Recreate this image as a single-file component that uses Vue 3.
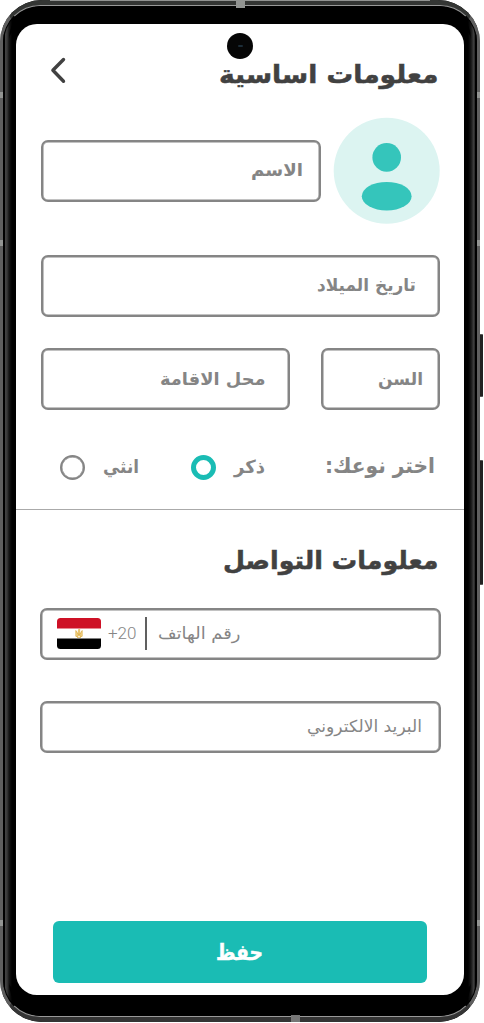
<script setup>
import { h } from 'vue'

// Label fitted to a fixed width; `base` is the baseline inside a box of height `ht`.
const Label = (p) =>
  h('svg', { width: p.w, height: p.ht, viewBox: `0 0 ${p.w} ${p.ht}`, style: { display: 'block', overflow: 'visible', flex: 'none' } }, [
    h('text', {
      x: 0,
      y: p.base,
      direction: 'ltr',
      fill: p.color || '#858585',
      stroke: p.bold ? p.color || '#858585' : 'none',
      'stroke-width': p.bold || 0,
      'font-family': p.font || "'DejaVu Sans', sans-serif",
      'font-size': p.size,
      'font-weight': p.weight || 700,
      textLength: p.w,
      lengthAdjust: 'spacingAndGlyphs'
    }, p.text)
  ])
Label.props = ['w', 'ht', 'base', 'size', 'text', 'color', 'weight', 'font', 'bold']

// The trailing right-to-left mark keeps the colon on the left of the phrase.
const genderPrompt = 'اختر نوعك:\u200F'
</script>

<template>
  <div class="stage">
    <div class="phone">
      <div class="rim"></div>
      <i class="band top-a"></i><i class="band top-b"></i><i class="band bottom"></i>
      <i class="band l1"></i><i class="band l2"></i><i class="band l3"></i>
      <i class="band r1"></i><i class="band r2"></i><i class="band r3"></i>
      <i class="key power"></i><i class="key volume"></i>
      <main class="screen">
        <div class="camera"><i></i></div>
        <header class="head">
          <svg class="back" width="18" height="28" viewBox="0 0 18 28">
            <path d="M14.5 3.5 3.9 14.3l10.6 10.9" fill="none" stroke="#414141" stroke-width="3.4" stroke-linecap="round" stroke-linejoin="round" />
          </svg>
          <Label :w="219.5" :ht="30" :base="22" :size="25" :bold="0.5" color="#414141" text="معلومات اساسية" />
        </header>

        <div class="row identity">
          <div class="field name"><Label :w="52" :ht="24" :base="18.8" :size="17.5" text="الاسم" /></div>
          <svg class="avatar" width="107" height="107" viewBox="0 0 107 107">
            <circle cx="53.7" cy="53.8" r="53" fill="#dcf4f1" />
            <circle cx="53.7" cy="40.4" r="14.3" fill="#35c5bb" />
            <ellipse cx="53.7" cy="79.2" rx="24.9" ry="14.3" fill="#35c5bb" />
          </svg>
        </div>

        <div class="field birth"><Label :w="99" :ht="24" :base="19" :size="17.5" text="تاريخ الميلاد" /></div>

        <div class="row place-row">
          <div class="field place"><Label :w="105.5" :ht="24" :base="18.8" :size="17.5" text="محل الاقامة" /></div>
          <div class="field age"><Label :w="45" :ht="24" :base="18.8" :size="17.5" text="السن" /></div>
        </div>

        <div class="row gender">
          <i class="radio"></i>
          <Label class="female" :w="36" :ht="28" :base="19" :size="18" text="انثي" />
          <i class="radio on"></i>
          <Label class="male" :w="31" :ht="28" :base="19" :size="18" text="ذكر" />
          <Label class="ask" :w="110" :ht="28" :base="19" :size="21.5" :text="genderPrompt" />
        </div>

        <div class="rule"></div>

        <div class="contact"><Label :w="215.5" :ht="30" :base="22" :size="25" :bold="0.5" color="#414141" text="معلومات التواصل" /></div>

        <div class="field phone-field">
          <svg class="flag" width="44" height="31" viewBox="0 0 44 31">
            <defs><clipPath id="flagClip"><rect width="44" height="31" rx="3.5" /></clipPath></defs>
            <g clip-path="url(#flagClip)">
              <rect width="44" height="31" fill="#fff" />
              <rect width="44" height="10.5" fill="#ce1126" />
              <rect y="20.5" width="44" height="10.5" fill="#000" />
            </g>
            <path d="M18.8 12.5v5.8l2 .6.4-3 .8 2 .8-2 .4 3 2-.6v-5.8L23 16l-.4-3.5.2-1h-1.2l-.2 1L21 16zM20 19.5h4" fill="#f3d48c" stroke="#d6a32b" stroke-width=".6" />
          </svg>
          <Label class="code" :w="28.5" :ht="24" :base="17" :size="16" :weight="300" font="Roboto, sans-serif" text="+20" />
          <i class="bar"></i>
          <Label :w="82.5" :ht="24" :base="17" :size="16.5" :weight="400" text="رقم الهاتف" />
        </div>

        <div class="field email"><Label :w="115" :ht="24" :base="17" :size="16.5" :weight="400" text="البريد الالكتروني" /></div>

        <button class="save"><Label :w="47" :ht="30" :base="23" :size="22" :bold="0.5" color="#fff" text="حفظ" /></button>
      </main>
    </div>
  </div>
</template>

<style>
html, body { margin: 0; background: #fff; }
</style>

<style scoped>
.stage { width: 484px; height: 1023px; overflow: hidden; background: #fff; }
.phone {
  position: relative; box-sizing: border-box; width: 480px; height: 1022px;
  padding: 23.5px 16px 27px 16.4px; border-radius: 42px;
  background: linear-gradient(90deg, #777 0, #858585 2px, #000 3px, #000 4.5px, #444 5px, #3a3a3a 7px, #161616 9px, #000 12px, #000 468px, #161616 471px, #444 474px, #000 475.5px, #000 477px, #858585 478px, #666 480px);
}
.rim {
  position: absolute; inset: 0; border-radius: 42px; box-sizing: border-box;
  border-top: 5px solid #343634; border-bottom: 5px solid #343434;
  border-left: 3px solid #5f5f5f; border-right: 3px solid #5f5f5f;
}
.rim::before {
  content: ''; position: absolute; inset: 0; border: 1px solid #999; border-radius: 37px;
  border-left-color: #000; border-right-color: #000;
}
.rim::after { content: ''; position: absolute; inset: 1px 6px; border-top: 17px solid #000; border-bottom: 21px solid #000; border-radius: 33px; }
.band { position: absolute; background: #929492; width: 3px; height: 6px; }
.top-a { left: 236px; top: 0; width: 9px; height: 8px; }
.top-b { left: 50px; top: 0; width: 380px; height: 1px; }
.bottom { left: 291px; bottom: 0; width: 9px; height: 7px; background: #777; }
.l1 { left: 0; top: 92px; } .l2 { left: 0; top: 240px; } .l3 { left: 0; top: 920px; }
.r1 { right: 0; top: 92px; } .r2 { right: 0; top: 240px; } .r3 { right: 0; top: 920px; }
.key { position: absolute; left: 480px; width: 3px; background: #222; border-radius: 0 1px 1px 0; box-sizing: border-box; border: solid #555; border-width: 1px 0; }
.power { top: 334px; height: 63px; } .volume { top: 460px; height: 125px; }

.screen {
  position: relative; width: 448px; height: 971.5px; background: #fff; border-radius: 21px;
  display: flex; flex-direction: column; overflow: hidden;
}
.camera {
  position: absolute; left: 210.8px; top: 9px; width: 26px; height: 26px; border-radius: 50%;
  background: #060606; display: grid; place-items: center;
}
.camera i { width: 5px; height: 2px; border-radius: 1px; background: #1c2d38; }
.row { display: flex; flex: none; }
.head { display: flex; justify-content: space-between; align-items: flex-start; margin: 32.5px 26px 0 32.5px; height: 61px; flex: none; }
.head > :last-child { margin-top: 4.5px; }
.field {
  box-sizing: border-box; border: 2px solid #858585; border-radius: 7px; background: #fff;
  box-shadow: inset 0 0 0 .5px #858585;
  display: flex; align-items: center; justify-content: flex-end; height: 62px; flex: none;
}
.identity { height: 137.5px; margin-left: 24.5px; gap: 12.5px; align-items: flex-start; }
.name { width: 280px; margin-top: 22.9px; padding: 0 15.5px 3px 0; }
.birth { margin-left: 24.5px; width: 398.7px; padding: 0 21.5px 3px 0; }
.place-row { margin: 31.5px 0 0 24.5px; gap: 31px; }
.place { width: 249px; padding: 0 22.5px 3px 0; }
.age { width: 118.7px; padding: 0 14.7px 3px 0; }
.gender { margin: 43.5px 0 0 43.2px; height: 28px; align-items: center; }
.radio { box-sizing: border-box; width: 25px; height: 25px; border: 2px solid #858585; border-radius: 50%; box-shadow: inset 0 0 0 .4px #858585; }
.radio.on { border: 5px solid #1abcb4; margin-left: 52px; box-shadow: none; }
.female { margin-left: 18.5px; }
.male { margin-left: 18px; }
.ask { margin-left: 59.5px; }
.rule { height: 1px; background: #aaa; margin-top: 27.5px; flex: none; }
.contact { display: flex; justify-content: flex-end; margin: 36.5px 26px 0 0; height: 61px; flex: none; }
.phone-field, .email { margin-left: 23.2px; width: 401px; height: 52px; }
.phone-field { justify-content: flex-start; padding-left: 15.5px; }
.code { margin-left: 7px; }
.bar { width: 1.5px; height: 33px; background: #606060; margin: 0 11.5px 0 8.5px; }
.email { margin-top: 41.5px; padding-right: 17px; }
.save {
  display: flex; align-items: center; justify-content: center; margin: auto 37.5px 12px 36.5px; padding: 0;
  height: 62px; flex: none; border: 0; border-radius: 6px; background: #1abcb4;
}
</style>
